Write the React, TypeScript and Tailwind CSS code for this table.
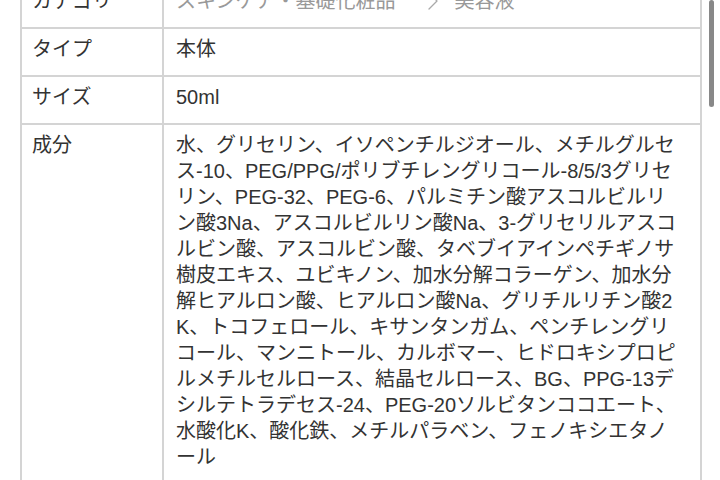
const rows = [
  { label: "タイプ", value: "本体" },
  { label: "サイズ", value: "50ml" },
  {
    label: "成分",
    value:
      "水、グリセリン、イソペンチルジオール、メチルグルセス-10、PEG/PPG/ポリブチレングリコール-8/5/3グリセリン、PEG-32、PEG-6、パルミチン酸アスコルビルリン酸3Na、アスコルビルリン酸Na、3-グリセリルアスコルビン酸、アスコルビン酸、タベブイアインペチギノサ樹皮エキス、ユビキノン、加水分解コラーゲン、加水分解ヒアルロン酸、ヒアルロン酸Na、グリチルリチン酸2K、トコフェロール、キサンタンガム、ペンチレングリコール、マンニトール、カルボマー、ヒドロキシプロピルメチルセルロース、結晶セルロース、BG、PPG-13デシルテトラデセス-24、PEG-20ソルビタンココエート、水酸化K、酸化鉄、メチルパラベン、フェノキシエタノール",
  },
];

export default function App() {
  return (
    <div className="relative w-[720px] h-[480px] overflow-hidden bg-white font-['Liberation_Sans','Noto_Sans_CJK_JP',sans-serif] text-[20px] leading-[26px] text-[#333]">
      {/* Spec table */}
      <div className="ml-[20px] mt-[-21px] w-[682px] border-2 border-[#d4d4d4] grid grid-cols-[142px_1fr]">
        {/* Category row (scrolled mostly out of view) */}
        <div className="pl-[10px] pt-[7px] pb-[13px] border-r-2 border-[#d4d4d4]">カテゴリ</div>
        <div className="pl-[12px] pr-[20px] pt-[7px] pb-[13px] flex items-center text-[#999]">
          <span>スキンケア・基礎化粧品</span>
          <svg className="ml-[33px] mr-[16px] shrink-0" width="10" height="18" viewBox="0 0 10 18" fill="none">
            <polyline points="1,1 9,9 1,17" stroke="#aaa" strokeWidth="1.3" strokeLinecap="round" strokeLinejoin="round" />
          </svg>
          <span>美容液</span>
        </div>

        {rows.map((row) => (
          <div key={row.label} className="contents">
            <div className="pl-[10px] pt-[7px] pb-[13px] border-t-2 border-r-2 border-[#d4d4d4]">
              {row.label}
            </div>
            <div className="pl-[12px] pr-[20px] pt-[7px] pb-[13px] border-t-2 border-[#d4d4d4] break-all">
              {row.value}
            </div>
          </div>
        ))}
      </div>

      {/* Scrollbar */}
      <div className="absolute top-0 left-[709px] w-[5px] h-[107px] rounded-full bg-[#888]" />
    </div>
  );
}
